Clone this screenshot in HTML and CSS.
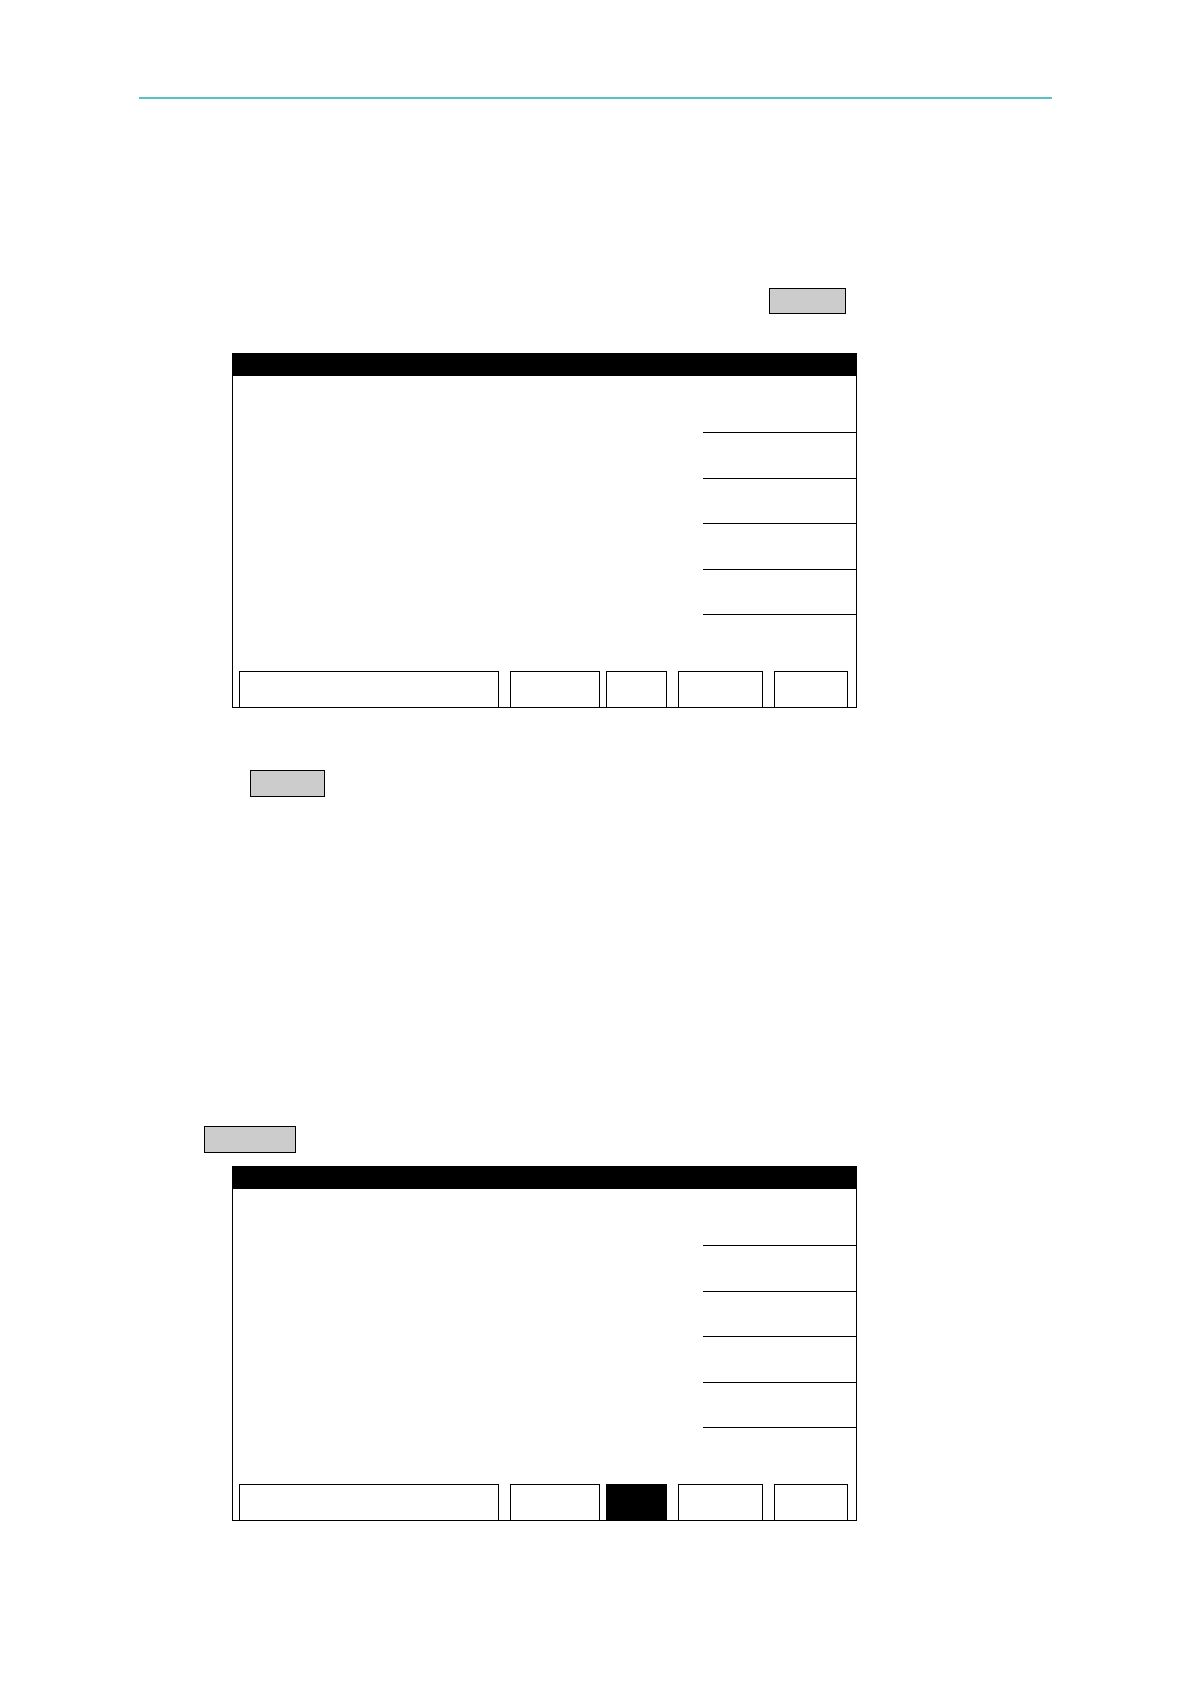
FILE: index.html
```html
<!DOCTYPE html>
<html lang="en">
<head>
<meta charset="utf-8">
<title>Screen</title>
<link rel="stylesheet" href="styles.css">
</head>
<body>
<div class="page">
  <div class="rule"></div>

  <div class="key key-a"></div>

  <div class="screen screen-a">
    <div class="screen-head"></div>
    <div class="screen-body">
      <div class="fields">
        <div class="field first"></div>
        <div class="field"></div>
        <div class="field"></div>
        <div class="field"></div>
        <div class="field"></div>
      </div>
      <div class="softkeys">
        <div class="soft s1"></div>
        <div class="soft s2"></div>
        <div class="soft s3"></div>
        <div class="soft s4"></div>
        <div class="soft s5"></div>
      </div>
    </div>
  </div>

  <div class="key key-b"></div>

  <div class="key key-c"></div>

  <div class="screen screen-b">
    <div class="screen-head"></div>
    <div class="screen-body">
      <div class="fields">
        <div class="field first"></div>
        <div class="field"></div>
        <div class="field"></div>
        <div class="field"></div>
        <div class="field"></div>
      </div>
      <div class="softkeys">
        <div class="soft s1"></div>
        <div class="soft s2"></div>
        <div class="soft s3 active"></div>
        <div class="soft s4"></div>
        <div class="soft s5"></div>
      </div>
    </div>
  </div>
</div>
</body>
</html>
```

FILE: styles.css
```css
html, body {
  margin: 0;
  padding: 0;
  background: #ffffff;
  font-family: "Liberation Sans", Arial, sans-serif;
}

.page {
  display: flow-root;
  width: 1191px;
  min-height: 1684px;
}

.rule {
  margin: 97px 0 0 139px;
  width: 913px;
  height: 2px;
  background: #56c2c4;
}

.key {
  box-sizing: border-box;
  background: #cccccc;
  border: 1px solid #000000;
}

.key-a {
  margin: 189px 0 0 769px;
  width: 77px;
  height: 26px;
}

.key-b {
  margin: 62px 0 0 250px;
  width: 75px;
  height: 27px;
}

.key-c {
  margin: 329px 0 0 204px;
  width: 92px;
  height: 27px;
}

.screen {
  margin-left: 232px;
  width: 625px;
}

.screen-a {
  margin-top: 39px;
}

.screen-b {
  margin-top: 13px;
}

.screen-head {
  height: 23px;
  background: #000000;
}

.screen-body {
  box-sizing: border-box;
  height: 332px;
  border: 1.3px solid #000000;
  border-top: 0;
  display: flex;
  flex-direction: column;
}

.fields {
  height: 295px;
  margin-left: 470px;
  display: flex;
  flex-direction: column;
}

.field {
  height: 44.5px;
  border-bottom: 1.3px solid #000000;
}

.field.first {
  height: 56px;
}

.softkeys {
  display: flex;
  align-items: flex-end;
  height: 35.7px;
  padding-left: 6px;
}

.soft {
  box-sizing: border-box;
  height: 35.7px;
  border: 1.3px solid #000000;
  border-bottom: 0;
  background: #ffffff;
}

.soft.active {
  background: #000000;
}

.s1 { width: 260px; }
.s2 { width: 90px; margin-left: 11px; }
.s3 { width: 61px; margin-left: 6px; }
.s4 { width: 85px; margin-left: 11px; }
.s5 { width: 74px; margin-left: 11px; }
```
